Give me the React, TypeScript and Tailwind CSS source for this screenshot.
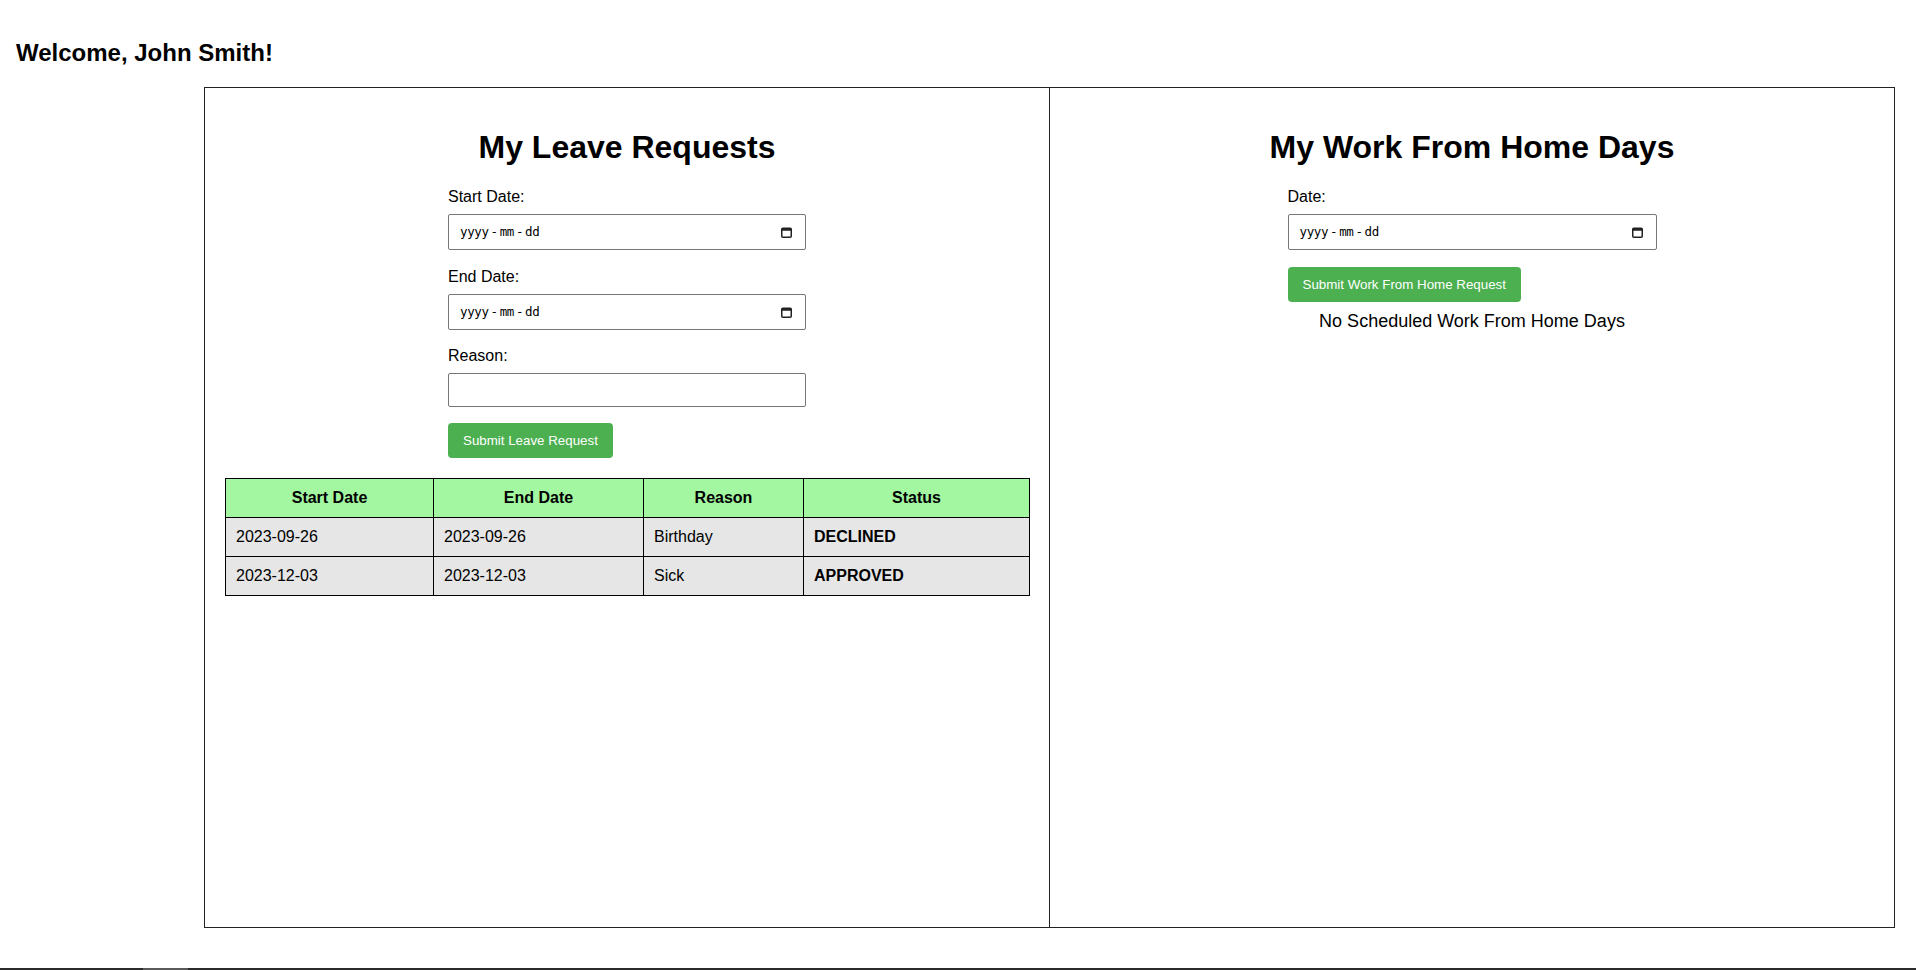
import React from 'react';

type LeaveRequest = {
  startDate: string;
  endDate: string;
  reason: string;
  status: string;
};

const leaveRequests: LeaveRequest[] = [
  { startDate: '2023-09-26', endDate: '2023-09-26', reason: 'Birthday', status: 'DECLINED' },
  { startDate: '2023-12-03', endDate: '2023-12-03', reason: 'Sick', status: 'APPROVED' },
];

// Chrome-style calendar glyph shown inside the date field
const CalendarIcon: React.FC = () => (
  <svg width="11" height="11" viewBox="0 0 11 11" className="shrink-0">
    <rect x="0.75" y="1.25" width="9.5" height="9" fill="none" stroke="#222" strokeWidth="1.5" rx="1" />
    <rect x="0.75" y="1.25" width="9.5" height="2.5" fill="#222" />
  </svg>
);

const DateField: React.FC<{ className?: string }> = ({ className = '' }) => (
  <div
    className={`flex items-center justify-between h-[36px] pl-[11px] pr-[13px] border border-[#767676] rounded-[2px] bg-white ${className}`}
  >
    <span className="text-[12.5px] text-black font-['DejaVu_Sans_Mono',monospace] tracking-[-0.4px]">
      yyyy<span className="mx-[2px]">-</span>mm<span className="mx-[2px]">-</span>dd
    </span>
    <CalendarIcon />
  </div>
);

const SubmitButton: React.FC<{ children: React.ReactNode }> = ({ children }) => (
  <button className="h-[35px] px-[15px] bg-[#4caf50] text-white text-[13.33px] leading-[15px] rounded-[4px] cursor-pointer">
    {children}
  </button>
);

const Label: React.FC<{ children: React.ReactNode }> = ({ children }) => (
  <label className="block text-[16px] leading-[18px] mb-[8px]">{children}</label>
);

const LeavePanel: React.FC = () => (
  <div className="w-[846px] h-[841px] border border-[#222] p-5">
    <h1 className="mt-[21px] mb-[22px] text-[32px] leading-[37px] font-bold text-center">My Leave Requests</h1>

    <div className="w-[358px] mx-auto">
      <Label>Start Date:</Label>
      <DateField className="mb-[18px]" />
      <Label>End Date:</Label>
      <DateField className="mb-[17px]" />
      <Label>Reason:</Label>
      <input
        type="text"
        className="block w-full h-[34px] px-2 border border-[#767676] rounded-[2px] mb-[16px] text-[13px]"
      />
      <SubmitButton>Submit Leave Request</SubmitButton>
    </div>

    <table className="mt-[20px] w-[804px] table-fixed border-collapse text-[16px]">
      <colgroup>
        <col className="w-[208px]" />
        <col className="w-[210px]" />
        <col className="w-[160px]" />
        <col className="w-[226px]" />
      </colgroup>
      <thead>
        <tr className="bg-[#a3f7a1]">
          {['Start Date', 'End Date', 'Reason', 'Status'].map((h) => (
            <th key={h} className="border border-black p-[10px] leading-[18px] font-bold text-center">
              {h}
            </th>
          ))}
        </tr>
      </thead>
      <tbody>
        {leaveRequests.map((r) => (
          <tr key={r.startDate} className="bg-[#e6e6e6]">
            <td className="border border-black p-[10px] leading-[18px]">{r.startDate}</td>
            <td className="border border-black p-[10px] leading-[18px]">{r.endDate}</td>
            <td className="border border-black p-[10px] leading-[18px]">{r.reason}</td>
            <td className="border border-black p-[10px] leading-[18px] font-bold">{r.status}</td>
          </tr>
        ))}
      </tbody>
    </table>
  </div>
);

const WorkFromHomePanel: React.FC = () => (
  <div className="w-[846px] h-[841px] border border-[#222] -ml-px p-5">
    <h1 className="mt-[21px] mb-[22px] text-[32px] leading-[37px] font-bold text-center">My Work From Home Days</h1>

    <div className="w-[369px] mx-auto">
      <Label>Date:</Label>
      <DateField className="mb-[17px]" />
      <SubmitButton>Submit Work From Home Request</SubmitButton>
      <p className="mt-[9px] text-[18px] leading-[21px] text-center">No Scheduled Work From Home Days</p>
    </div>
  </div>
);

export default function App() {
  return (
    <div className="min-h-[970px] bg-white text-black font-['Liberation_Sans',Arial,sans-serif]">
      <h2 className="pt-[39px] pl-4 text-[24px] leading-[28px] font-bold">Welcome, John Smith!</h2>

      <div className="flex mt-[20px] ml-[204px]">
        <LeavePanel />
        <WorkFromHomePanel />
      </div>

      {/* bottom strip seen along the window edge */}
      <div className="flex mt-[40px] h-[2px] bg-[#2b2b2b]">
        <div className="ml-[143px] w-[45px] bg-[#5a5a5a]" />
      </div>
    </div>
  );
}
